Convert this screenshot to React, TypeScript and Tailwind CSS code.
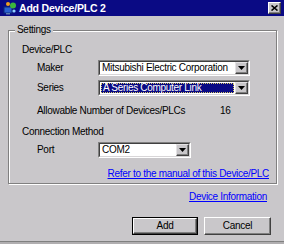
import type { ReactNode } from "react";

// classic Win2k dialog "Add Device/PLC 2"
const FONT = "font-['Liberation_Sans',Arial,sans-serif]";

function DropButton() {
  return (
    <div className="flex w-[13px] items-center justify-center border border-[#e4e2e4] border-r-[#404040] border-b-[#404040] bg-[#c9c7ca] shadow-[inset_-1px_-1px_0_#808080]">
      <svg width="7" height="4" viewBox="0 0 7 4">
        <path d="M0 0h7L3.5 4z" fill="#000" />
      </svg>
    </div>
  );
}

function Combo({ value, width, selected }: { value: string; width: string; selected?: boolean }) {
  return (
    <div className={`flex h-4 ${width} border border-[#808080] border-r-white border-b-white`}>
      <div className="flex flex-1 border border-[#404040] border-r-[#d8d6d8] border-b-[#d8d6d8] bg-white">
        <div className="flex flex-1 items-center px-[1px] py-[1px]">
          {selected ? (
            <div className="flex h-full flex-1 items-center border border-dotted border-[#d6c86a] bg-[#0a0a84] pl-[1px] text-white">
              {value}
            </div>
          ) : (
            <span className="pl-[1px]">{value}</span>
          )}
        </div>
        <DropButton />
      </div>
    </div>
  );
}

function Row({ children, className }: { children: ReactNode; className: string }) {
  return <div className={`flex h-4 items-center whitespace-nowrap ${className}`}>{children}</div>;
}

function Button({ label, isDefault }: { label: string; isDefault?: boolean }) {
  return (
    <div className={isDefault ? "border border-black" : ""}>
      <div
        className={`flex items-center justify-center border border-white border-r-[#404040] border-b-[#404040] shadow-[inset_-1px_-1px_0_#808080] ${
          isDefault ? "h-4 w-[64px]" : "h-[18px] w-[67px]"
        }`}
      >
        {label}
      </div>
    </div>
  );
}

export default function App() {
  return (
    <div className={`flex h-[244px] w-[284px] flex-col bg-[#c9c7ca] text-[10px] leading-none tracking-[-0.3px] text-black ${FONT}`}>
      {/* Title bar */}
      <div className="flex h-4 items-center bg-[#0a0a84] pl-[3px] pr-[3px]">
        <svg width="14" height="14" viewBox="0 0 14 14">
          <rect x="1" y="6" width="8" height="6" fill="#2a5fd0" stroke="#0a2a7a" strokeWidth="1" />
          <rect x="3" y="12" width="4" height="1.5" fill="#5a7ab0" />
          <circle cx="10" cy="4.5" r="3" fill="#3cb43c" />
          <circle cx="5" cy="3" r="2" fill="#f0a020" />
          <circle cx="11" cy="10" r="1.6" fill="#8fd0ff" />
        </svg>
        <span className="ml-[2px] text-[10.5px] font-bold tracking-[-0.2px] text-white">Add Device/PLC 2</span>
        <div className="ml-auto flex h-3 w-[13px] items-center justify-center border border-white border-r-[#404040] border-b-[#404040] bg-[#c9c7ca] shadow-[inset_-1px_-1px_0_#808080]">
          <svg width="7" height="6" viewBox="0 0 7 6">
            <path d="M0.5 0.5l6 5M6.5 0.5l-6 5" stroke="#000" strokeWidth="1.6" />
          </svg>
        </div>
      </div>

      {/* Settings group */}
      <div className="ml-2 mt-[14px] w-[269px]">
        <div className="relative border border-[#808080] pb-px pt-[11px] shadow-[inset_1px_1px_0_#fff,1px_1px_0_#fff]">
          <span className="absolute -top-[6px] left-[6px] bg-[#c9c7ca] px-[2px]">Settings</span>
          <Row className="pl-[13px]">Device/PLC</Row>
          <Row className="mt-[2px] pl-[28px]">
            <span className="w-[61px]">Maker</span>
            <Combo value="Mitsubishi Electric Corporation" width="w-[152px]" />
          </Row>
          <Row className="mt-1 pl-[28px]">
            <span className="w-[61px]">Series</span>
            <Combo value="A Series Computer Link" width="w-[152px]" selected />
          </Row>
          <Row className="mt-[7px] pl-[28px]">
            <span className="w-[183px]">Allowable Number of Devices/PLCs</span>
            <span>16</span>
          </Row>
          <Row className="mt-[5px] pl-[13px]">Connection Method</Row>
          <Row className="mt-[2px] pl-[28px]">
            <span className="w-[61px]">Port</span>
            <Combo value="COM2" width="w-[93px]" />
          </Row>
          <Row className="mt-2 justify-end pr-[7px]">
            <span className="text-[#0000ff] underline">Refer to the manual of this Device/PLC</span>
          </Row>
        </div>
      </div>

      <Row className="mt-[5px] justify-end pr-[17px]">
        <span className="text-[#0000ff] underline">Device Information</span>
      </Row>

      <div className="mt-3 flex justify-end gap-[6px] pr-[13px]">
        <Button label="Add" isDefault />
        <Button label="Cancel" />
      </div>

      <div className="mt-auto h-[3px] border-t border-[#808080] bg-[#b0aeb0]" />
    </div>
  );
}
